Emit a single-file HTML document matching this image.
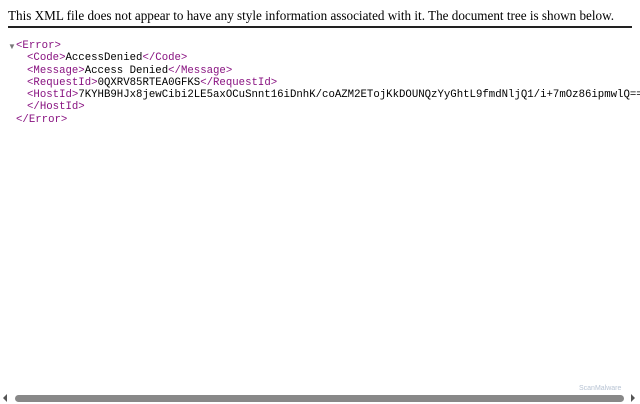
<!DOCTYPE html>
<html><head><style>
html,body{margin:0;padding:0;width:640px;height:404px;overflow:hidden;background:#fff;}
.hdr{position:absolute;left:8px;top:8px;font:13.15px "Liberation Serif",serif;color:#000;white-space:nowrap;}
.rule{position:absolute;left:8px;top:26px;width:624px;height:2px;background:#222;}
.tree{position:absolute;left:16px;top:40px;font:10.7px/12.3px "Liberation Mono",monospace;color:#000;white-space:pre;}
.tree div.i{padding-left:11px;}
.t{color:#881280;}
.arrow{position:absolute;left:8px;top:42px;font-size:8px;color:#777;}
.sb{position:absolute;left:15px;top:395px;width:609px;height:7px;background:#888;border-radius:4px;}
.la{position:absolute;left:3px;top:394px;width:0;height:0;border-top:4px solid transparent;border-bottom:4px solid transparent;border-right:4px solid #555;}
.ra{position:absolute;left:631px;top:394px;width:0;height:0;border-top:4px solid transparent;border-bottom:4px solid transparent;border-left:4px solid #555;}
.sm{position:absolute;left:579px;top:385px;font:7px "Liberation Sans",sans-serif;color:#b8c4d4;}
</style></head><body>
<div class="hdr">This XML file does not appear to have any style information associated with it. The document tree is shown below.</div>
<div class="rule"></div>
<div class="arrow">▼</div>
<div class="tree"><div><span class="t">&lt;Error&gt;</span></div><div class="i"><span class="t">&lt;Code&gt;</span>AccessDenied<span class="t">&lt;/Code&gt;</span></div><div class="i"><span class="t">&lt;Message&gt;</span>Access Denied<span class="t">&lt;/Message&gt;</span></div><div class="i"><span class="t">&lt;RequestId&gt;</span>0QXRV85RTEA0GFKS<span class="t">&lt;/RequestId&gt;</span></div><div class="i"><span class="t">&lt;HostId&gt;</span>7KYHB9HJx8jewCibi2LE5axOCuSnnt16iDnhK/coAZM2ETojKkDOUNQzYyGhtL9fmdNljQ1/i+7mOz86ipmwlQ==</div><div class="i"><span class="t">&lt;/HostId&gt;</span></div><div><span class="t">&lt;/Error&gt;</span></div></div>
<div class="sm">ScanMalware</div>
<div class="la"></div><div class="sb"></div><div class="ra"></div>
</body></html>
